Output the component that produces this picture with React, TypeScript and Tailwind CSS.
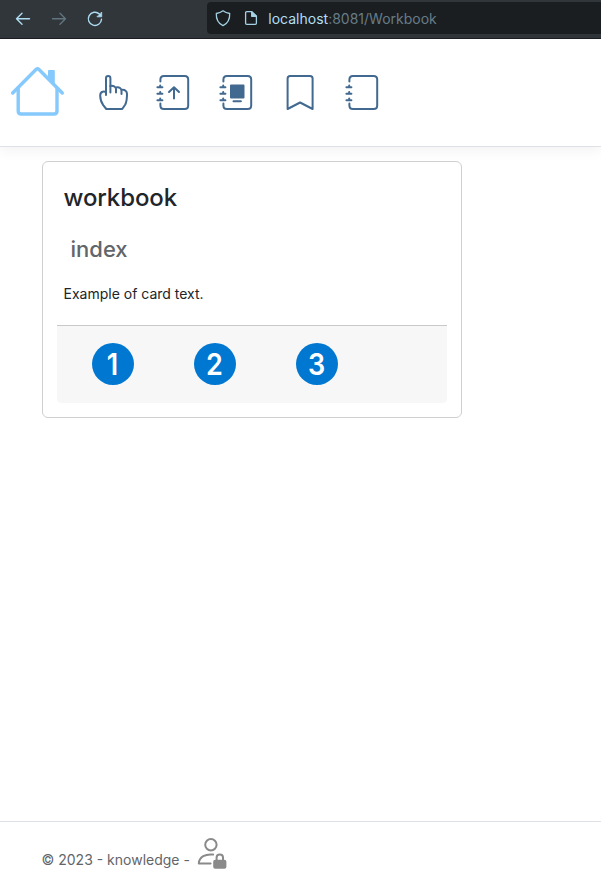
import React from "react";

const steps = ["1", "2", "3"];

function BrowserBar() {
  return (
    <div className="flex h-[39px] shrink-0 border-b border-[#1c1e26] bg-[#31363b]">
      <svg className="h-[38px] w-[207px] shrink-0" viewBox="0 0 207 38" fill="none" stroke="#aeddf2" strokeWidth="1.4" strokeLinecap="round" strokeLinejoin="round">
        <path d="M29.5 18.7H16.5M22 13.2L16.5 18.7L22 24.2" />
        <path stroke="#60757f" d="M52.5 18.7H65.5M60 13.2L65.5 18.7L60 24.2" />
        <path d="M99.4 14A6.6 6.6 0 1 0 101.5 19.2" />
        <path d="M101.7 12.4V16.8H97.3Z" fill="#aeddf2" strokeWidth="0.8" />
      </svg>
      <div className="mt-0.5 flex h-8 flex-1 items-center rounded-l bg-[#1a1e21] pl-[7px]">
        <svg className="h-[18px] w-[18px]" viewBox="0 0 18 18" fill="none" stroke="#a5d1e5" strokeWidth="1.3" strokeLinejoin="round">
          <path d="M9 1.8C7 3.4 4.7 4.2 2.3 4.5C2.1 9.5 3.6 14.2 9 16.6C14.4 14.2 15.9 9.5 15.7 4.5C13.3 4.2 11 3.4 9 1.8Z" />
        </svg>
        <svg className="ml-[11px] h-[18px] w-[16px]" viewBox="0 0 16 18" fill="none" stroke="#a5d1e5" strokeWidth="1.3" strokeLinejoin="round">
          <path d="M8.7 2.7H3.7C3 2.7 2.6 3.1 2.6 3.8V14.2C2.6 14.9 3 15.3 3.7 15.3H12.3C13 15.3 13.4 14.9 13.4 14.2V7.3Z" />
          <path d="M8.7 2.7V7.3H13.4Z" fill="#a5d1e5" />
        </svg>
        <span className="mt-0.5 ml-[9.3px] text-[14px] leading-none whitespace-nowrap text-[#b3dff2]">
          localhost<span className="text-[#677c87]">:8081/Workbook</span>
        </span>
      </div>
    </div>
  );
}

function Notebook({ children }: { children?: React.ReactNode }) {
  return (
    <svg className="h-9 w-9" viewBox="0 0 36 36" fill="none" stroke="#426990" strokeWidth="2" strokeLinecap="round" strokeLinejoin="round">
      <path d="M5.4 7.5V5.5Q5.4 2 8.9 2H29.7Q33.2 2 33.2 5.5V31.5Q33.2 35 29.7 35H8.9Q5.4 35 5.4 31.5V29.5" />
      <path d="M2.4 13.2H7.4M2.4 19.7H7.4M2.4 26.2H7.4M5.2 11.5V13M5.2 18V19.5M5.2 24.5V26" />
      {children}
    </svg>
  );
}

function Header() {
  return (
    <header className="flex h-[108px] shrink-0 items-center border-b border-[#dee2e6] bg-white pb-0.5 pl-[9px] shadow-[0_4px_12px_rgba(0,0,0,0.05)]">
      <svg className="h-[54px] w-14" viewBox="9 65 56 54" fill="none" stroke="#86c9fc" strokeWidth="3.4" strokeLinecap="round" strokeLinejoin="round">
        <path d="M12.7 93L36 69.5Q37.5 68 39 69.5L62.3 93" />
        <path d="M18.2 88.5V111Q18.2 114 21.2 114H54Q57 114 57 111V88.5" />
        <path d="M48 77V71Q48 70 49 70H53.8Q54.8 70 54.8 71V84Z" fill="#86c9fc" stroke="none" />
      </svg>
      <svg className="ml-8 h-10 w-8" viewBox="97 72 32 40" fill="none" stroke="#426990" strokeWidth="2" strokeLinecap="round" strokeLinejoin="round">
        <path d="M106 95V78.3Q106 76 108.2 76Q110.4 76 110.4 78.3V92.5" />
        <path d="M110.4 86Q112 85.2 114.2 86.3Q116 87.2 116 89V92.5M116 87.5Q118.3 86.8 120 88Q121.5 89.2 121.5 91V94M121.5 90Q124 89.4 125.8 91Q127 92 127 94Q127 101 125.3 104.5L122.2 109H106.3L103.2 105.2Q100.2 101 100.2 95.5Q100.2 92.2 102.7 91.7Q104.3 91.4 106 92" />
      </svg>
      <div className="ml-[26px] flex items-center gap-[27px]">
        <Notebook><path d="M19 24.5V13.5M14 18L19 13.2L24 18" /></Notebook>
        <Notebook>
          <path d="M13 11.5H25.5V23.5H13Z" fill="#426990" />
          <path d="M15.5 27.3H22.9" />
        </Notebook>
        <svg className="h-9 w-9" viewBox="0 0 36 36" fill="none" stroke="#426990" strokeWidth="2" strokeLinejoin="round">
          <path d="M6.6 35V4.5Q6.6 2 9.1 2H29.1Q31.6 2 31.6 4.5V35L19.1 28.5Z" />
        </svg>
        <Notebook />
      </div>
    </header>
  );
}

function Card() {
  return (
    <section className="flex h-[257px] w-[420px] flex-col rounded-md border border-[#cfcfcf] bg-white p-3.5">
      <div className="px-[6.5px] pt-[7px]">
        <h1 className="text-[24px] leading-[30px] font-medium tracking-[-0.1px] text-[#212529]">workbook</h1>
        <h2 className="mt-[22px] pl-[7px] text-[22px] leading-[28px] font-medium text-[#626569]">index</h2>
        <p className="mt-[21px] text-[14px] leading-[20px] text-[#212529]">Example of card text.</p>
      </div>
      <footer className="mt-auto flex h-[78px] gap-[60px] rounded-b border-t border-[#c8c8c8] bg-[#f7f7f7] pt-[17px] pl-[34.5px]">
        {steps.map((step) => (
          <span key={step} className="flex h-[42px] w-[42px] items-center justify-center rounded-full bg-[#0077d0] text-[30px] leading-none font-semibold text-white">
            <span className="inline-block scale-x-90">{step}</span>
          </span>
        ))}
      </footer>
    </section>
  );
}

export default function App() {
  return (
    <div className="flex h-[889px] w-full flex-col overflow-hidden bg-white font-['Inter',sans-serif]">
      <BrowserBar />
      <Header />
      <main className="flex-1 pt-3.5 pl-[42px]"><Card /></main>
      <footer className="flex h-[68px] shrink-0 items-start border-t border-[#dee2e6] pt-[15px] pl-[41.5px] text-[14px] text-[#6c757d]">
        <span className="mt-[13px] leading-5 text-[#626569]">© 2023 - knowledge -</span>
        <svg className="ml-[7px] h-8 w-8" viewBox="0.4 0 32 32" fill="none" stroke="#8a8a8a" strokeWidth="2" strokeLinecap="round" strokeLinejoin="round">
          <circle cx="14.3" cy="7.8" r="5.7" />
          <path d="M16.5 17.6C9 16.8 2.5 19.7 2.2 26.6H14" />
          <rect x="16.6" y="22.8" width="13.2" height="9" rx="2" fill="#8a8a8a" stroke="none" />
          <path d="M20 23V20.5Q20 17.6 23.2 17.6Q26.4 17.6 26.4 20.5V23" />
        </svg>
      </footer>
    </div>
  );
}
